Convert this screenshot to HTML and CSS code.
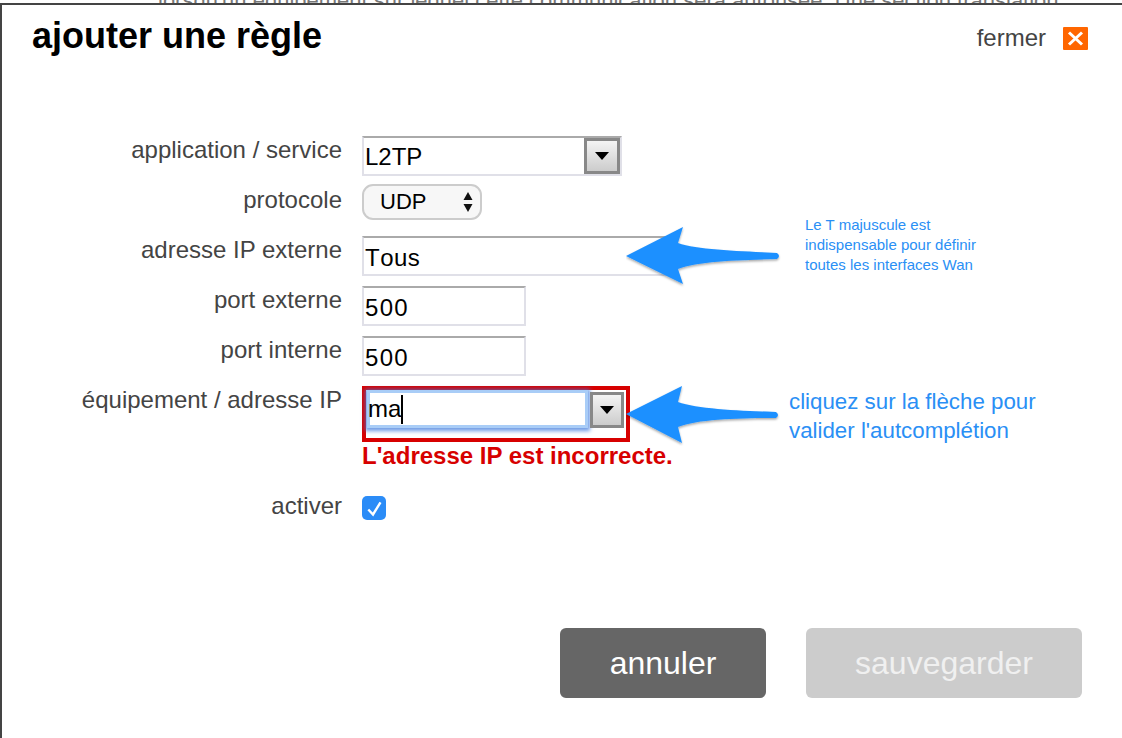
FILE: index.html
```html
<!DOCTYPE html>
<html lang="fr">
<head>
<meta charset="utf-8">
<title>ajouter une règle</title>
<link rel="stylesheet" href="styles.css">
</head>
<body>
<div class="behind">lorsqu'un équipement sur lequel cette communication sera autorisée. Une section translation</div>
<main class="modal">
  <header class="head">
    <h1 class="title">ajouter une règle</h1>
    <div class="close"><span>fermer</span>
      <svg class="close-icon" width="25" height="23" viewBox="0 0 25 23"><rect width="25" height="23" rx="1" fill="#ff6600"/><path d="M6 5.500 19 17.500M19 5.500 6 17.500" stroke="#fff" stroke-width="3" fill="none"/></svg>
    </div>
  </header>
  <form class="form">
    <div class="row"><label class="lab">application / service</label>
      <div class="combo combo-wide"><span class="val">L2TP</span><span class="drop"><i class="tri"></i></span></div></div>
    <div class="row"><label class="lab">protocole</label>
      <div class="pill"><span>UDP</span><svg width="10" height="20" viewBox="0 0 10 20"><path d="M5 0 9.500 8 .5 8Z M5 20 .5 12 9.500 12Z" fill="#111"/></svg></div></div>
    <div class="row"><label class="lab">adresse IP externe</label>
      <div class="field field-wide"><span class="val val-tous">Tous</span></div></div>
    <div class="row"><label class="lab">port externe</label>
      <div class="field field-port"><span class="val val-num">500</span></div></div>
    <div class="row"><label class="lab">port interne</label>
      <div class="field field-port"><span class="val val-num">500</span></div></div>
    <div class="row row-ip"><label class="lab">équipement / adresse IP</label>
      <div class="ip-col">
        <div class="err-box"><div class="focus"><span class="val val-ma">ma</span><i class="caret"></i></div><span class="drop drop-err"><i class="tri"></i></span></div>
        <p class="err">L'adresse IP est incorrecte.</p>
      </div></div>
    <div class="row row-check"><label class="lab lab-check">activer</label>
      <svg class="check" width="24" height="24" viewBox="0 0 24 24"><rect width="24" height="24" rx="5" fill="#2b8cf7"/><path d="M6.300 13.500 11 18.500 18.500 6.300" stroke="#fff" stroke-width="2.400" fill="none"/></svg></div>
  </form>
  <div class="actions">
    <button class="btn btn-cancel" type="button">annuler</button>
    <button class="btn btn-save" type="button">sauvegarder</button>
  </div>
</main>
<svg class="arrow arrow-a" width="160" height="62" viewBox="0 0 160 62"><defs><filter id="s" x="-10%" y="-10%" width="120%" height="130%"><feDropShadow dx="0" dy="1.500" stdDeviation="1.200" flood-color="#000" flood-opacity=".35"/></filter></defs><path d="M0 30 57 1 52 17C72 24 115 25 151 27Q155 30 151 33C115 34 72 35 52 43L57 58Z" fill="#1e90ff" filter="url(#s)"/></svg>
<p class="note note-a">Le T majuscule est<br>indispensable pour définir<br>toutes les interfaces Wan</p>
<svg class="arrow arrow-b" width="160" height="62" viewBox="0 0 160 62"><path d="M0 30 56 2 52 18C72 25 115 27 150 28Q154 31 150 34C115 34 72 35 52 43L56 59Z" fill="#1e90ff" filter="url(#s)"/></svg>
<p class="note note-b">cliquez sur la flèche pour<br>valider l'autcomplétion</p>
</body>
</html>
```
FILE: styles.css
```css
* { box-sizing: border-box; }
html, body { margin: 0; height: 738px; overflow: hidden; background: #fff; }
body { font-family: "Liberation Sans", Arial, sans-serif; position: relative; color: #444; }
.behind { height: 3px; overflow: hidden; font-size: 22px; line-height: 1px; color: #777; padding-left: 158px; white-space: nowrap; }
.modal { height: 735px; border-top: 2px solid #444; border-left: 2px solid #444; padding: 0 40px 0 30px; }
.head { display: flex; justify-content: space-between; align-items: flex-start; height: 131px; padding-top: 11px; }
.title { margin: 0; font-size: 36px; line-height: 40px; font-weight: bold; color: #000; }
.close { display: flex; align-items: center; gap: 17px; font-size: 24px; line-height: 26px; margin-top: 9px; margin-right: -6px; }
.close-icon { display: block; }
.form { display: flex; flex-direction: column; }
.row { display: flex; height: 50px; gap: 20px; }
.lab { width: 310px; text-align: right; font-size: 24px; line-height: 26px; margin-top: 1px; }
.lab-check { margin-top: 2px; }
.val { color: #000; font-size: 24px; line-height: 28px; }
.val-tous { font-kerning: none; letter-spacing: .5px; margin-left: -1px; }
.val-num { letter-spacing: 1.300px; margin-left: -1px; }
.val-ma { margin-left: -2px; }
.combo { display: flex; align-items: stretch; width: 260px; height: 40px; border: 2px solid; border-color: #aaa #e0e0e8 #e0e0e8 #e0e0e8; }
.combo .val { flex: 1; padding: 5px 1px; }
.drop { width: 36px; height: 36px; border: 3px solid #888; background: linear-gradient(#f4f4f4, #ccc); display: flex; align-items: center; justify-content: center; }
.tri { width: 0; height: 0; border: 7.500px solid transparent; border-top: 8px solid #000; border-bottom: 0; }
.pill { width: 120px; height: 36px; margin-top: -2px; border: 2px solid #ccc; border-radius: 11px; background: #f7f7f7; display: flex; align-items: center; justify-content: space-between; padding: 0 7px 0 16px; color: #000; font-size: 22px; }
.field { height: 40px; border: 2px solid; border-color: #aaa #e0e0e8 #e0e0e8 #e0e0e8; padding: 6px 2px; }
.field-wide { width: 310px; }
.field-port { width: 164px; }
.row-ip { height: 105px; }
.ip-col { display: flex; flex-direction: column; }
.err-box { width: 268px; height: 56px; border: 4px solid #d70000; display: flex; align-items: flex-start; padding-left: 1px; }
.focus { width: 221px; height: 38px; border: 3px solid #a9cdf7; box-shadow: 0 1px 4px 2px rgba(60, 120, 220, .75); display: flex; align-items: center; background: #fff; }
.caret { width: 2px; height: 29px; background: #000; }
.drop-err { width: 34px; margin: 2px 0 0 2px; }
.err { margin: 0; font-size: 24px; line-height: 28px; font-weight: bold; color: #d70000; white-space: nowrap; }
.check { margin-top: 5px; }
.actions { position: absolute; top: 628px; left: 560px; display: flex; gap: 40px; }
.btn { height: 70px; border: 0; border-radius: 6px; font: 32px "Liberation Sans", Arial, sans-serif; color: #fff; }
.btn-cancel { width: 206px; background: #666; }
.btn-save { width: 276px; background: #ccc; color: #f0f0f0; }
.arrow { position: absolute; }
.arrow-a { left: 626px; top: 226px; }
.arrow-b { left: 626px; top: 384px; }
.note { position: absolute; margin: 0; color: #2a8ff5; }
.note-a { left: 805px; top: 215px; font-size: 15px; line-height: 20px; }
.note-b { left: 789px; top: 387px; font-size: 22.300px; line-height: 29px; }
```
